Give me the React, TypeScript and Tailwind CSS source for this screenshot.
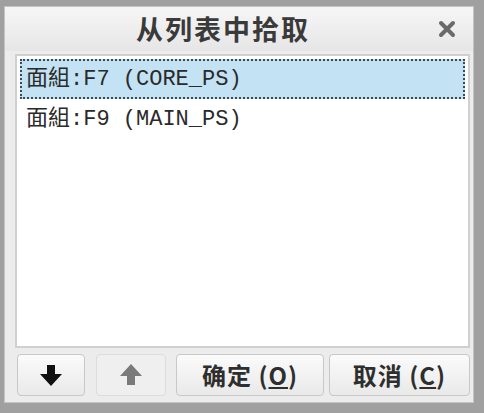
const cjk = { fontFamily: '"Noto Sans CJK SC", "Liberation Sans", sans-serif' };
const mono = { fontFamily: '"Liberation Mono", "Noto Sans CJK SC", monospace' };

const items = ["面組:F7 (CORE_PS)", "面組:F9 (MAIN_PS)"];

function BlockArrow({ up, color }: { up?: boolean; color: string }) {
  return (
    <svg width="24" height="24" viewBox="0 0 24 24" className={up ? "rotate-180" : ""}>
      <path d="M8 2 H16 V11 H23 L12 23 L1 11 H8 Z" fill={color} />
    </svg>
  );
}

const btn =
  "h-[42px] flex items-center justify-center rounded-[4px] border border-[#c8c8c8] bg-gradient-to-b from-[#fbfbfb] to-[#e9e9e9]";

export default function App() {
  return (
    <div className="w-[484px] h-[413px] bg-[#a0a0a0] pt-[6px] pr-[10px] pb-[10px] pl-[4px]">
      <div className="h-full flex flex-col bg-[#ececec] border border-[#c4c4c4]">
        {/* Title bar */}
        <div className="h-[44px] flex items-center bg-gradient-to-b from-[#f6f6f6] to-[#e6e6e6] px-[6px]">
          <div className="flex-1 text-center pl-[8px] text-[27px] font-bold text-[#3a3a3a] tracking-[2px]" style={cjk}>
            从列表中拾取
          </div>
          <div className="w-[40px] flex items-center justify-center">
            <svg width="18" height="18" viewBox="0 0 18 18">
              <path d="M3 3 L15 15 M15 3 L3 15" stroke="#6a6a6a" strokeWidth="4" strokeLinecap="round" />
            </svg>
          </div>
        </div>

        {/* List */}
        <div className="flex-1 mt-[3px] ml-[10px] mr-[3px] bg-white border-[2px] border-[#d0d0d0] p-[3px] flex flex-col">
          {items.map((t, i) => (
            <div
              key={t}
              className={
                i === 0
                  ? "h-[40px] flex items-center px-[4px] bg-[#c3e2f3] border-[2px] border-dotted border-[#3a4a55] text-[#2a2a2a] text-[22px]"
                  : "h-[40px] flex items-center px-[6px] text-[#2a2a2a] text-[22px]"
              }
              style={mono}
            >
              {t}
            </div>
          ))}
        </div>

        {/* Buttons */}
        <div className="h-[54px] flex items-center ml-[12px] mr-[3px]">
          <button className={`w-[68px] ${btn}`}>
            <BlockArrow color="#111" />
          </button>
          <button className="w-[70px] ml-[11px] h-[42px] flex items-center justify-center rounded-[4px] border border-[#dcdcdc] bg-[#efefef]">
            <BlockArrow up color="#7a7a7a" />
          </button>
          <button className={`w-[148px] ml-[10px] ${btn} text-[24px] font-bold text-[#2e2e2e] tracking-[1px]`} style={cjk}>
            确定 (<span className="underline">O</span>)
          </button>
          <button className={`flex-1 ml-[5px] ${btn} text-[24px] font-bold text-[#2e2e2e] tracking-[1px]`} style={cjk}>
            取消 (<span className="underline">C</span>)
          </button>
        </div>
      </div>
    </div>
  );
}
